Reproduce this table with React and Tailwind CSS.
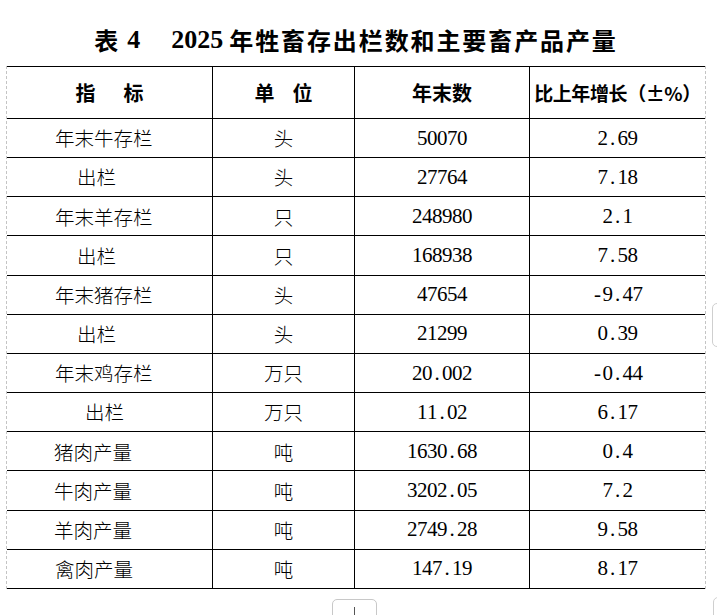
import React from "react";

const CJK = "font-['Noto_Sans_CJK_SC',sans-serif]";
const SERIF = "font-['Liberation_Serif',serif]";

const rows = [
  ["年末牛存栏", 48, "头", "50070", "2.69"],
  ["出栏", 70, "头", "27764", "7.18"],
  ["年末羊存栏", 48, "只", "248980", "2.1"],
  ["出栏", 70, "只", "168938", "7.58"],
  ["年末猪存栏", 48, "头", "47654", "-9.47"],
  ["出栏", 70, "头", "21299", "0.39"],
  ["年末鸡存栏", 48, "万只", "20.002", "-0.44"],
  ["出栏", 78, "万只", "11.02", "6.17"],
  ["猪肉产量", 47, "吨", "1630.68", "0.4"],
  ["牛肉产量", 47, "吨", "3202.05", "7.2"],
  ["羊肉产量", 47, "吨", "2749.28", "9.58"],
  ["禽肉产量", 48, "吨", "147.19", "8.17"],
];

function Mono({ s }) {
  return (
    <span className={`inline-flex ${SERIF} text-[21px] leading-none text-black`}>
      {s.split("").map((c, i) => (
        <span key={i} className="inline-block w-[10px] text-center">
          {c}
        </span>
      ))}
    </span>
  );
}

function padClass(p) {
  if (p === 70) return "pl-[70px]";
  if (p === 78) return "pl-[78px]";
  if (p === 47) return "pl-[47px]";
  return "pl-[48px]";
}

export default function App() {
  return (
    <div className="relative w-[717px] h-[615px] overflow-hidden bg-white text-black">
      <div className="pt-[26px]">
        {/* Title */}
        <div className="ml-[6px] w-[700px] h-[28px] flex items-center justify-center font-bold leading-none">
          <span className={`${CJK} text-[24px]`}>表</span>
          <span className={`${SERIF} text-[26px] ml-[9px]`}>4</span>
          <span className={`${SERIF} text-[26px] ml-[31px]`}>2025</span>
          <span className={`${CJK} text-[24px] ml-[6px] tracking-[1.9px]`}>
            年牲畜存出栏数和主要畜产品产量
          </span>
        </div>

        {/* Table */}
        <div className="mt-[12px] ml-[6px] w-[700px] border-x border-dashed border-[#c4c4c4]">
          <div className="border-t border-black">
            {/* Header */}
            <div className={`grid grid-cols-[206px_142px_175px_175px] h-[52px] border-b border-black ${CJK} font-bold text-[20px] leading-none`}>
              <div className="flex items-center justify-center border-r border-black">
                <span>指</span>
                <span className="w-[28px]" />
                <span>标</span>
              </div>
              <div className="flex items-center justify-center border-r border-black">
                <span>单</span>
                <span className="w-[18px]" />
                <span>位</span>
              </div>
              <div className="flex items-center justify-center border-r border-black">
                年末数
              </div>
              <div className="flex items-center justify-center text-[19px] tracking-[-0.4px]">
                比上年增长（±%）
              </div>
            </div>

            {/* Body */}
            {rows.map((r, i) => (
              <div
                key={i}
                className="grid grid-cols-[206px_142px_175px_175px] h-[39.17px] border-b border-black"
              >
                <div className={`flex items-center border-r border-black ${padClass(r[1])} ${CJK} font-light text-[19.5px] leading-none`}>
                  {r[0]}
                </div>
                <div className={`flex items-center justify-center border-r border-black ${CJK} font-light text-[19.5px] leading-none`}>
                  {r[2]}
                </div>
                <div className="flex items-center justify-center border-r border-black">
                  <Mono s={r[3]} />
                </div>
                <div className="flex items-center justify-center">
                  <Mono s={r[4]} />
                </div>
              </div>
            ))}
          </div>
        </div>

        {/* Bottom add button (partially visible) */}
        <div className="pl-[332px] mt-[10px]">
          <div className="relative w-[45px] h-[30px] rounded-[5px] border border-[#c8c8c8] bg-white">
            <div className="absolute left-[21px] top-[7px] w-[1px] h-[12px] bg-[#555]" />
          </div>
        </div>
      </div>

      {/* Right edge overlays */}
      <div className="absolute left-[712px] top-[303px] w-[24px] h-[44px] rounded-[5px] border border-[#cfcfcf] bg-white" />
      <div className="absolute left-[713px] top-[597px] w-[24px] h-[30px] rounded-[5px] border border-[#cfcfcf] bg-white" />
    </div>
  );
}
